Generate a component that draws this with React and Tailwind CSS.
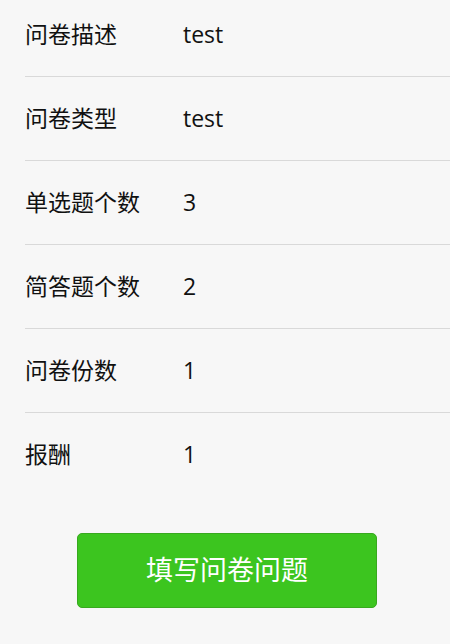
const rows = [
  { label: '问卷描述', value: 'test' },
  { label: '问卷类型', value: 'test' },
  { label: '单选题个数', value: '3' },
  { label: '简答题个数', value: '2' },
  { label: '问卷份数', value: '1' },
  { label: '报酬', value: '1' },
];

export default function App() {
  return (
    <div className="min-h-[644px] bg-[#f7f7f7] font-['Open_Sans','Noto_Sans_CJK_SC',sans-serif] text-[23px] text-[#111] overflow-hidden">
      <div className="ml-[25px] -mt-[7px]">
        {rows.map((row, idx) => (
          <div
            key={idx}
            className={`flex items-center h-[84px] pb-[2px] ${idx < rows.length - 1 ? 'border-b border-[#d9d9d9]' : ''}`}
          >
            <span className="w-[158px] leading-[28px]">{row.label}</span>
            <span className="leading-[28px]">{row.value}</span>
          </div>
        ))}
      </div>

      {/* Submit */}
      <div className="flex justify-center pt-[36px] pl-[4px]">
        <button className="w-[300px] h-[75px] rounded-[5px] bg-[#3cc51f] border border-[#38a91f] text-white text-[27px]">
          填写问卷问题
        </button>
      </div>
    </div>
  );
}
